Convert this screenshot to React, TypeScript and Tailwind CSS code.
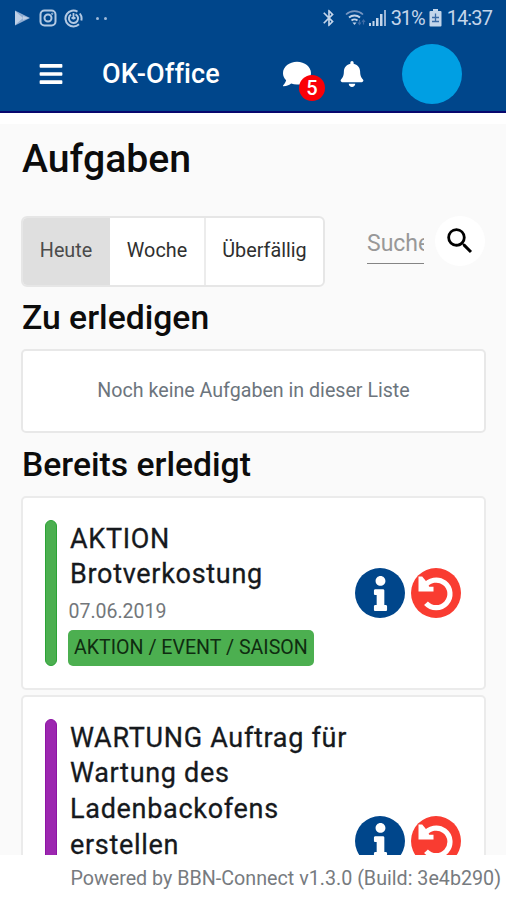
import { FaBars, FaBell, FaComment, FaInfo } from 'react-icons/fa';
import { MdBluetooth, MdSearch } from 'react-icons/md';

interface ITask {
  id: number;
  title: string[];
  date?: string;
  category?: string;
  cardClass: string;
  barClass: string;
}

const tabs = [
  { label: 'Heute', className: 'w-[87px] bg-[#dfdfdf] pr-[1px] text-[#4b4b4b]' },
  { label: 'Woche', className: 'w-[94px] text-[#2f2f2f]' },
  { label: 'Überfällig', className: 'flex-1 border-l-2 border-[#ececec] text-[#2f2f2f]' },
];

const tasks: ITask[] = [
  {
    id: 1,
    title: ['AKTION', 'Brotverkostung'],
    date: '07.06.2019',
    category: 'AKTION / EVENT / SAISON',
    cardClass: 'min-h-[194px]',
    barClass: 'border-[#2ba336] bg-[#4caf50]',
  },
  {
    id: 2,
    title: ['WARTUNG Auftrag für', 'Wartung des', 'Ladenbackofens', 'erstellen'],
    cardClass: 'min-h-[291px]',
    barClass: 'border-[#8e14a4] bg-[#9c27b0]',
  },
];

const PlayIcon = () => (
  <svg className="h-[18px] w-[17px]" viewBox="0 0 17 18">
    <path d="M1 1.5 16 9 1 16.5Z" fill="#8fadd2" />
    <path d="M1 2v14l8-7ZM9 7l6 2-6 2Z" fill="#bfd0e6" />
  </svg>
);

const InstagramIcon = () => (
  <svg className="size-[18px]" viewBox="0 0 18 18" fill="none" stroke="#b3c9e3">
    <rect x="1.5" y="1.5" width="15" height="15" rx="4" strokeWidth="2" />
    <circle cx="9" cy="9" r="3.5" strokeWidth="2" />
    <circle cx="13.2" cy="4.8" r="0.7" strokeWidth="1" />
  </svg>
);

const SwirlIcon = () => (
  <svg className="size-[19px]" viewBox="0 0 19 19" fill="none" stroke="#b3c9e3">
    <path d="M13.5 2.6A8 8 0 1 0 15 15.300M15.800 4.500A8 8 0 0 1 17.300 11.500" strokeWidth="2" />
    <path d="M11.500 5.300A4.600 4.600 0 1 1 7 5.600" strokeWidth="2" />
    <path d="M9.500 4v6.500M7.500 9h4" strokeWidth="1.800" />
  </svg>
);

const WifiIcon = () => (
  <svg className="h-[18px] w-[22px]" viewBox="0 0 22 18" fill="none">
    <path d="M1 5.500a12.500 12.500 0 0 1 17 0" stroke="#7897c1" strokeWidth="1.700" />
    <path d="M4 8.500a8.500 8.500 0 0 1 11 0M6.500 11.500a5 5 0 0 1 6 0" stroke="#c4d5ea" strokeWidth="1.900" />
    <path d="m7.500 13.500 2 2.500 2-2.500Z" fill="#c4d5ea" />
    <path d="M14.500 11v4m-1.500-1.500 1.500 2 1.500-2M18.500 15.500v-4M17 13l1.500-2 1.500 2" stroke="#3f6ca6" strokeWidth="1.200" />
  </svg>
);

const SignalIcon = () => (
  <svg className="h-[18px] w-[18px]" viewBox="0 0 18 18">
    <path d="M0 14h2v3H0zM3.500 12h2v5h-2zM7 9h2.500v8H7zM11 5h2.500v12H11z" fill="#c4d5ea" />
    <path d="M15 1h2v16h-2z" fill="#9ab3d3" />
  </svg>
);

const BatteryIcon = () => (
  <svg className="h-[18px] w-[13px]" viewBox="0 0 13 18">
    <path d="M4 0h5v2h2.500a1 1 0 0 1 1 1v13.500a1 1 0 0 1-1 1h-10a1 1 0 0 1-1-1V3a1 1 0 0 1 1-1H4Z" fill="#c4d5ea" />
    <path d="M6.500 4.500v8M3 8.500h7M3 12.500h7" stroke="#3a6aa5" strokeWidth="1.300" />
  </svg>
);

const UndoIcon = () => (
  <svg className="size-[50px]" viewBox="0 0 50 50" fill="none">
    <path d="M13.500 18.500A13.800 13.800 0 1 1 15 35.200" stroke="#fff" strokeWidth="5.200" />
    <path d="M7.500 8.500h3.700l3.300 4 3.700 6.300h4.300v4.700h-15Z" fill="#fff" />
  </svg>
);

const Header = () => (
  <header className="h-[113px] shrink-0 border-b-2 border-[#08086e] bg-[#00468b]">
    <div className="flex h-9 items-center pr-[14px] pl-[14px] text-[#c4d5ea]">
      <PlayIcon />
      <div className="ml-[8px] flex items-center gap-[7px]">
        <InstagramIcon />
        <SwirlIcon />
      </div>
      <div className="ml-[13px] flex gap-[5px]">
        <i className="size-[3px] rounded-full bg-[#9fb9d8]" />
        <i className="size-[3px] rounded-full bg-[#9fb9d8]" />
      </div>
      <div className="ml-auto flex items-center">
        <MdBluetooth className="mr-1.5 size-[20px]" />
        <WifiIcon />
        <div className="ml-[2px]">
          <SignalIcon />
        </div>
        <span className="ml-[4px] w-[33px] text-[20px] tracking-[-1.1px] whitespace-nowrap">31%</span>
        <div className="mr-[5px] ml-[5px]">
          <BatteryIcon />
        </div>
        <span className="text-[20px] tracking-[-0.9px]">14:37</span>
      </div>
    </div>

    <div className="flex h-[75px] items-center pr-11 pl-[38px] text-white">
      <FaBars className="size-[26px]" />
      <h1 className="mt-0.5 ml-[38px] text-[27px] font-medium tracking-[0.15px]">OK-Office</h1>
      <div className="relative ml-auto">
        <FaComment className="size-[28px]" />
        <span className="absolute top-[15px] left-[16px] flex size-[26px] items-center justify-center rounded-full bg-[#fa0007] text-[20px] font-medium">
          5
        </span>
      </div>
      <FaBell className="ml-[28px] size-[26px]" />
      <div className="ml-[37px] size-[60px] rounded-full bg-[#009fe3]" />
    </div>
  </header>
);

const TaskCard = ({ task }: { task: ITask }) => (
  <article
    className={`flex rounded-[5px] border-2 border-[#ebebeb] bg-white py-[22px] pr-[23px] pl-[22px] ${task.cardClass}`}
  >
    <div className={`w-3 shrink-0 rounded-full border ${task.barClass}`} />
    <div className="ml-[11px] flex-1">
      <h3 className="pt-[1.5px] pl-[2px] text-[27px] leading-[35.800px] tracking-[0.7px] whitespace-nowrap text-[#16191d]">
        {task.title.map((line) => (
          <span key={line} className="block [-webkit-text-stroke:0.3px_#16191d]">
            {line}
          </span>
        ))}
      </h3>
      {task.date && <p className="pl-[0.5px] text-[19.500px] leading-[37px] text-[#73777b]">{task.date}</p>}
      {task.category && (
        <span className="inline-flex h-9 items-center rounded-[5px] bg-[#4caf50] px-[6px] text-[19.600px] whitespace-nowrap text-[#0f2c10]">
          {task.category}
        </span>
      )}
    </div>
    <div className="flex items-center gap-[6px]">
      <button className="flex size-[50px] items-center justify-center rounded-full bg-[#00468b] text-white">
        <FaInfo className="size-[35px]" />
      </button>
      <button className="size-[50px] rounded-full bg-[#f93c31]">
        <UndoIcon />
      </button>
    </div>
  </article>
);

export default function App() {
  return (
    <div className="flex h-[900px] w-[506px] flex-col overflow-hidden bg-white font-['Roboto',sans-serif] text-[#0c0c0c]">
      <Header />

      <main className="mt-[11px] min-h-0 flex-1 overflow-hidden bg-[#fafafa] pr-5 pl-[21px]">
        <h2 className="mt-[12px] h-[46px] pl-[1px] text-[39.200px] leading-[46px] font-medium">Aufgaben</h2>

        <div className="mt-[34px] flex items-start">
          <div className="flex h-[71px] w-[304px] overflow-hidden rounded-md border-2 border-[#e6e6e6] bg-white">
            {tabs.map((tab) => (
              <button
                key={tab.label}
                className={`flex items-center justify-center pb-[1px] text-[19.800px] ${tab.className}`}
              >
                {tab.label}
              </button>
            ))}
          </div>
          <div className="mt-[7px] ml-[42px] h-[41px] w-[57px] overflow-hidden border-b border-[#858585] text-[23px] leading-[41px] whitespace-nowrap text-[#989898]">
            Suche
          </div>
          <button className="ml-[11px] flex size-[50px] items-center justify-center rounded-full bg-white text-black">
            <MdSearch className="size-[34px]" />
          </button>
        </div>

        <h2 className="mt-[11px] h-10 pl-[1px] text-[33.700px] leading-10 font-medium">Zu erledigen</h2>
        <div className="mt-[11px] flex h-[84px] items-center justify-center rounded-[5px] border-2 border-[#e8e8e8] bg-white text-[19.650px] text-[#6c757d]">
          Noch keine Aufgaben in dieser Liste
        </div>

        <h2 className="mt-[12px] h-10 pl-[1px] text-[33.700px] leading-10 font-medium">Bereits erledigt</h2>
        <div className="mt-[11px] flex flex-col gap-[5px]">
          {tasks.map((task) => (
            <TaskCard key={task.id} task={task} />
          ))}
        </div>
      </main>

      <footer className="h-[45px] shrink-0 bg-white pr-[5px] text-right text-[19.700px] leading-[47px] whitespace-nowrap text-[#777b7f]">
        Powered by BBN-Connect v1.3.0 (Build: 3e4b290)
      </footer>
    </div>
  );
}
